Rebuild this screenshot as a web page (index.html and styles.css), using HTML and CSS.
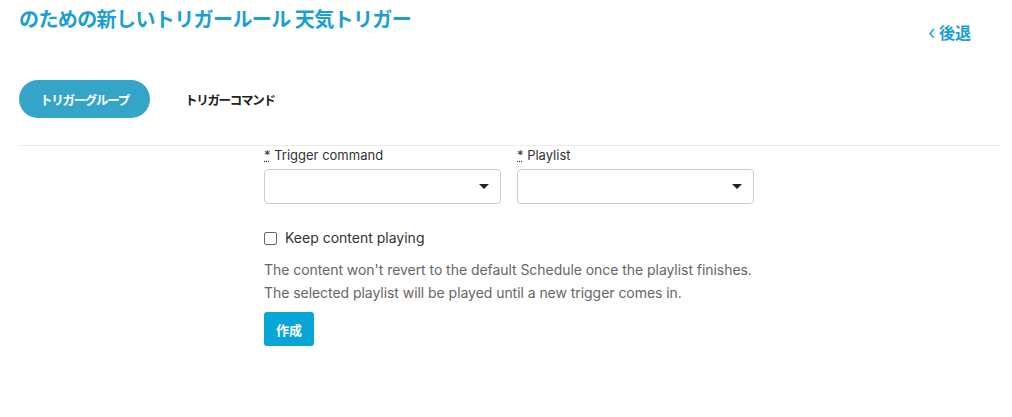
FILE: index.html
```html
<!DOCTYPE html>
<html lang="ja">
<head>
<meta charset="utf-8">
<link rel="stylesheet" href="styles.css">
</head>
<body>
<div class="page">
  <div class="header">
    <h1 class="title">のための新しいトリガールール 天気トリガー</h1>
    <a class="back"><span class="chev">‹</span> 後退</a>
  </div>
  <div class="tabs">
    <span class="tab active">トリガーグループ</span>
    <span class="tab">トリガーコマンド</span>
  </div>
  <div class="divider"></div>
  <form class="form">
    <div class="row">
      <div class="field">
        <label class="label"><span class="req">*</span> Trigger command</label>
        <div class="select"><span class="caret"></span></div>
      </div>
      <div class="field">
        <label class="label"><span class="req">*</span> Playlist</label>
        <div class="select"><span class="caret"></span></div>
      </div>
    </div>
    <label class="check"><span class="box"></span>Keep content playing</label>
    <p class="help">The content won't revert to the default Schedule once the playlist finishes.<br>The selected playlist will be played until a new trigger comes in.</p>
    <button type="button" class="submit">作成</button>
  </form>
</div>
</body>
</html>
```
FILE: styles.css
```css
* { box-sizing: border-box; }
body { margin: 0; background: #fff; font-family: Inter, "Noto Sans CJK JP", sans-serif; color: #333; }
.page { padding: 0 12px 0 19px; }
.header { display: flex; justify-content: space-between; align-items: flex-start; }
.title { margin: 7px 0 0; font-size: 20px; font-weight: 700; color: #1a9fd6; letter-spacing: -0.6px; line-height: 26px; }
.back { margin: 22px 29px 0 0; font-size: 16px; font-weight: 700; color: #1a9fd6; line-height: 22px; }
.chev { font-weight: 400; font-size: 19px; }
.tabs { display: flex; align-items: center; margin-top: 36px; gap: 35px; }
.tab { font-size: 12.5px; font-weight: 700; color: #222; letter-spacing: -1.3px; }
.tab.active { background: #34a5c8; color: #fff; width: 131px; height: 38px; border-radius: 19px; display: flex; align-items: center; justify-content: center; }
.divider { height: 1px; background: #ececec; margin-top: 27px; width: 981px; }
.form { margin-left: 245px; padding-top: 1px; }
.row { display: flex; gap: 16px; }
.field { width: 237px; }
.label { display: block; font-size: 13px; color: #333; line-height: 17px; margin-bottom: 5px; }
.req { text-decoration: underline dotted; }
.select { height: 35px; border: 1px solid #ccc; border-radius: 4px; position: relative; }
.caret { position: absolute; right: 11px; top: 14px; width: 0; height: 0; border-left: 5px solid transparent; border-right: 5px solid transparent; border-top: 5px solid #222; }
.check { display: flex; align-items: center; margin-top: 25px; font-size: 14px; color: #333; line-height: 18px; }
.box { width: 13px; height: 13px; border: 1px solid #666; border-radius: 2px; margin-right: 8px; }
.help { margin: 11px 0 0; font-size: 14px; line-height: 23px; color: #666; letter-spacing: -0.05px; }
.submit { display: block; margin-top: 8px; width: 50px; height: 34px; border: 0; border-radius: 3px; background: #08a6d6; color: #fff; font-size: 13px; font-weight: 700; font-family: Inter, "Noto Sans CJK JP", sans-serif; }
```
